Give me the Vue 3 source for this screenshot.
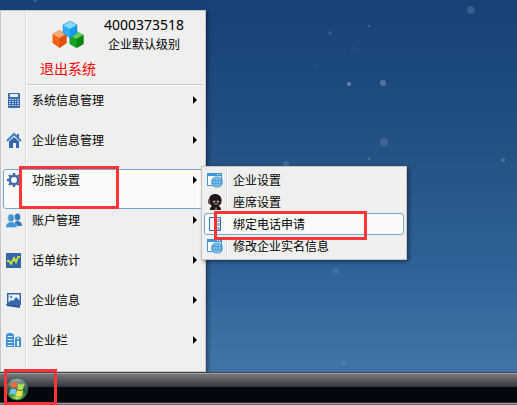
<template>
  <div class="desktop">
    <svg class="stars" aria-hidden="true">
      <circle v-for="(s, i) in stars" :key="i" :cx="s.x" :cy="s.y" :r="s.r" :fill-opacity="s.o" />
    </svg>

    <svg class="sprite" aria-hidden="true">
      <symbol id="ico-calc" viewBox="0 0 16 16">
        <rect x="2" y="1" width="12" height="15" rx="1" fill="#3b6db2" />
        <rect x="4" y="2" width="8" height="3" fill="#e8f0fa" />
        <g fill="#b4cae6">
          <rect x="3" y="7" width="2" height="1" /><rect x="6" y="7" width="2" height="1" /><rect x="9" y="7" width="1" height="1" /><rect x="11" y="7" width="2" height="1" />
          <rect x="3" y="9" width="2" height="1" /><rect x="6" y="9" width="2" height="1" /><rect x="9" y="9" width="1" height="1" /><rect x="11" y="9" width="2" height="1" />
          <rect x="3" y="11" width="2" height="1" /><rect x="6" y="11" width="2" height="1" /><rect x="9" y="11" width="1" height="1" /><rect x="11" y="11" width="2" height="1" />
          <rect x="3" y="13" width="2" height="1" /><rect x="6" y="13" width="2" height="1" /><rect x="9" y="13" width="1" height="1" /><rect x="11" y="13" width="2" height="1" />
        </g>
      </symbol>
      <symbol id="ico-home" viewBox="0 0 16 16">
        <path d="M11 2h2v5h-2z" fill="#3569ad" />
        <path d="M1 9 8 2l7 7" fill="none" stroke="#3e82c8" stroke-width="2" />
        <path d="M3 9.500 8 5l5 4.500V16h-3v-5H7v5H3z" fill="#3467ae" />
      </symbol>
      <symbol id="ico-gear" viewBox="0 0 16 16">
        <path
          d="M8 1v14M1 8h14M3 3l10 10M13 3 3 13"
          fill="none"
          stroke="#3c6aab"
          stroke-width="2.400"
        />
        <circle cx="8" cy="8" r="4.200" fill="#f5f8fb" stroke="#3c6aab" stroke-width="2.400" />
      </symbol>
      <symbol id="ico-users" viewBox="0 0 16 16">
        <g fill="#3579bd">
          <ellipse cx="11.500" cy="5" rx="2.800" ry="3.500" />
          <path d="M7 14c0-3 2-4 3.500-5h2c1.500 1 3.500 1 3.500 5z" />
        </g>
        <g fill="#3d96d6" stroke="#efefef" stroke-width=".5">
          <ellipse cx="5" cy="6" rx="3.300" ry="4" />
          <path d="M-.2 15.500c0-4 2-4.500 3.700-5.500h3c2 1 4.500 1.500 4.500 5.500z" />
        </g>
      </symbol>
      <symbol id="ico-chart" viewBox="0 0 16 16">
        <path d="M0 1h15v15H0z" fill="#3566a8" />
        <path d="M1 9h2l2 3 3-6 2 4 2-5h2" fill="none" stroke="#c4e03a" stroke-width="1.800" />
      </symbol>
      <symbol id="ico-picture" viewBox="0 0 16 16">
        <path d="m0 12 13 1 1-1v4l-13-2z" fill="#2b5797" />
        <path d="M1 1h14v12H1z" fill="#3467ae" />
        <path d="M2.500 2.500h11v8h-11z" fill="#f1f6fb" />
        <circle cx="5" cy="5" r="1.300" fill="#3d96d6" />
        <path d="m2 11 3-3 2 1 3-4 4 4v2z" fill="#3467ae" />
      </symbol>
      <symbol id="ico-building" viewBox="0 0 16 16">
        <path d="M0 3 2 1h4l2 2v12H0z" fill="#3d8fd0" />
        <path d="M1.500 4.500h5M1.500 7.500h5M1.500 10.500h5M1.500 13.500h5" stroke="#e4f0fa" />
        <path d="M9 6q3-3 6 0v9H9z" fill="#3d8fd0" />
        <circle cx="12" cy="6.500" r="1" fill="#fff" />
        <path d="M11 9h2v5h-2z" fill="#fff" />
      </symbol>
      <symbol id="ico-globe" viewBox="0 0 16 16">
        <path d="M.5 1.500h14v12H.5z" fill="#f7fbfe" stroke="#3d96d6" />
        <path d="M0 1h15v3H0z" fill="#3d96d6" />
        <path d="M10 2h1v1h-1zM12 2h1v1h-1z" fill="#fff" />
        <circle cx="10" cy="10" r="5.800" fill="#3792d2" />
        <path d="M4.500 10h11M5.500 7h9M5.500 13h9M10 4.500v11" fill="none" stroke="#c4e0f5" stroke-width=".6" />
        <ellipse cx="10" cy="10" rx="2.800" ry="5.500" fill="none" stroke="#c4e0f5" stroke-width=".6" />
      </symbol>
      <symbol id="ico-agent" viewBox="0 0 16 16">
        <path d="M2 6C2 2 5 0 8.500 0S15 3 14.500 7c0 3-1.500 4-3 5 1.500.5 2.500 1.500 2.500 4H3c0-2 .5-3 2-4-2-1-3-3-3-6z" fill="#211716" />
        <path d="M5 7.500Q9 4.500 13 7.500q-.5 3.500-4 3.500t-4-3.500z" fill="#43332f" />
        <circle cx="7" cy="7.500" r=".8" fill="#fff" /><circle cx="11" cy="7.500" r=".8" fill="#fff" />
        <path d="M7.500 10h3" stroke="#b5a49e" stroke-width=".8" />
        <rect x="1" y="5" width="2" height="5" rx="1" fill="#6d5b56" />
        <path d="m8 13 1 1 1-1v3H8z" fill="#7c6a66" />
      </symbol>
      <symbol id="ico-phonebook" viewBox="0 0 16 16">
        <path d="M2.500 1.500h11v13h-11z" fill="#fafcfe" stroke="#3f6eb0" />
        <path d="M7 1h2v14H7z" fill="#4272b4" />
        <path d="M10 3h3v3h-3zM10 7h3v3h-3zM10 11h3v3h-3z" fill="#9dbce0" />
      </symbol>
    </svg>

    <main class="workspace">
      <nav class="panel start-menu" aria-label="开始菜单">
        <header class="account">
          <svg class="logo" viewBox="0 0 32 28" aria-hidden="true">
            <path d="m7.500 9 7 4v9l-7 5-7-5v-9z" fill="#f4631c" />
            <path d="m7.500 9 7 4-7 4-7-4z" fill="#ffaa77" />
            <path d="m7.500 17 7-4v9l-7 5z" fill="#e34d0b" />
            <path d="m24.500 10 7 4v9l-7 4-7-4v-9z" fill="#19a326" />
            <path d="m24.500 10 7 4-7 4-7-4z" fill="#65cf59" />
            <path d="m24.500 18 7-4v9l-7 4z" fill="#08870f" />
            <path d="m18 0 7 4v8l-7 5-7-5V4z" fill="#2eaff3" />
            <path d="m18 0 7 4-7 4-7-4z" fill="#85dcff" />
            <path d="m18 8 7-4v8l-7 5z" fill="#139bea" />
            <path d="M11 4v8l7 5 7-5V4l-7-4z" fill="none" stroke="#2583bb" stroke-width=".5" />
          </svg>
          <div class="who">
            <span class="number">4000373518</span>
            <span class="level">企业默认级别</span>
          </div>
          <a class="logout" href="#">退出系统</a>
        </header>

        <ul class="list">
          <li v-for="item in menu" :key="item.label" class="entry">
            <button type="button" class="row tall" :class="{ active: item.children }">
              <svg class="icon"><use :href="'#ico-' + item.icon" /></svg>
              <span class="label">{{ item.label }}</span>
              <svg v-if="item.arrow" class="arrow" viewBox="0 0 4 8"><path d="M0 0l4 4-4 4z" /></svg>
            </button>
            <template v-if="item.children">
              <span class="mark mark-main"></span>
              <ul class="panel list submenu">
                <li v-for="child in item.children" :key="child.label" class="entry">
                  <button type="button" class="row" :class="{ active: child.active }">
                    <svg class="icon"><use :href="'#ico-' + child.icon" /></svg>
                    <span class="label">{{ child.label }}</span>
                  </button>
                  <span v-if="child.active" class="mark mark-sub"></span>
                </li>
              </ul>
            </template>
          </li>
        </ul>
      </nav>
    </main>

    <footer class="taskbar">
      <button type="button" class="orb" aria-label="开始">
        <svg viewBox="0 0 24 24">
          <defs>
            <radialGradient id="orb" cx=".5" cy="1" r="1">
              <stop offset="0" stop-color="#c4ff70" />
              <stop offset=".25" stop-color="#5cb040" />
              <stop offset=".55" stop-color="#28603c" />
              <stop offset=".85" stop-color="#5c7a72" />
              <stop offset="1" stop-color="#b4c4be" />
            </radialGradient>
          </defs>
          <circle cx="12" cy="12" r="11" fill="url(#orb)" stroke="#2f4f46" stroke-width=".8" />
          <path d="M3 8q9-10 18 0-9 5-18 0z" fill="#fff" fill-opacity=".2" />
          <path d="M6.500 6q3.500-2 6 0l-1 5.500q-3-2-6 0z" fill="#f26a35" />
          <path d="M13.200 6.500q3 2 6 0l-1 5.500q-3 2-6 0z" fill="#b2e25a" />
          <path d="M5.300 12.500q3-2 6 0l-1 5.500q-3-2-6 0z" fill="#6cc4f6" />
          <path d="M12 13q3 2 6 0l-1 5.500q-3 2-6 0z" fill="#ffdc55" />
        </svg>
      </button>
      <span class="mark mark-start"></span>
    </footer>
  </div>
</template>

<script setup>
const menu = [
  { label: '系统信息管理', icon: 'calc', arrow: true },
  { label: '企业信息管理', icon: 'home', arrow: true },
  {
    label: '功能设置',
    icon: 'gear',
    arrow: true,
    children: [
      { label: '企业设置', icon: 'globe' },
      { label: '座席设置', icon: 'agent' },
      { label: '绑定电话申请', icon: 'phonebook', active: true },
      { label: '修改企业实名信息', icon: 'globe' }
    ]
  },
  { label: '账户管理', icon: 'users', arrow: true },
  { label: '话单统计', icon: 'chart', arrow: true },
  { label: '企业信息', icon: 'picture', arrow: true },
  { label: '企业栏', icon: 'building', arrow: true }
]

const stars = [
  { x: 471, y: 10, r: 4, o: 0.16 },
  { x: 369, y: 26, r: 1, o: 0.3 },
  { x: 330, y: 33, r: 2, o: 0.14 },
  { x: 354, y: 49, r: 3, o: 0.03 },
  { x: 317, y: 65, r: 1, o: 0.12 },
  { x: 349, y: 84, r: 2, o: 0.38 },
  { x: 383, y: 83, r: 3, o: 0.27 },
  { x: 384, y: 142, r: 4, o: 0.14 },
  { x: 369, y: 159, r: 1, o: 0.3 },
  { x: 503, y: 160, r: 2, o: 0.2 },
  { x: 286, y: 164, r: 3, o: 0.15 },
  { x: 35, y: 0, r: 2, o: 0.2 },
  { x: 336, y: 271, r: 3, o: 0.1 },
  { x: 344, y: 363, r: 2, o: 0.15 }
]
</script>

<style>
body {
  margin: 0;
}
</style>

<style scoped>
.desktop {
  position: relative;
  display: flex;
  flex-direction: column;
  min-height: 100vh;
  overflow: hidden;
  background: linear-gradient(180deg, #164277 0%, #245284 38%, #30639a 68%, #4275a8 93%);
  font-family: "Noto Sans", "Noto Sans CJK SC", sans-serif;
  font-size: 12px;
  color: #000;
}

.stars {
  position: absolute;
  top: 0;
  left: 0;
  width: 100%;
  height: 100%;
  fill: #d5ecff;
}

.sprite {
  position: absolute;
  width: 0;
  height: 0;
}

.workspace {
  flex: 1;
  display: flex;
  align-items: flex-end;
}

.panel {
  box-sizing: border-box;
  padding: 2px;
  border: 1px solid #c6c6c6;
  background: linear-gradient(90deg, #efefef 24px, #dcdcdc 24px, #dcdcdc 25px, #fff 25px, #fff 26px, #efefef 26px);
  box-shadow: 2px 2px 4px rgba(0, 0, 0, 0.4);
}

.start-menu {
  position: relative;
  width: clamp(206px, 39vw, 260px);
  padding-top: 0;
}

.account {
  display: grid;
  grid-template-columns: 56px auto;
  justify-content: start;
  justify-items: center;
  column-gap: 8px;
  margin: 0 0 3px 24px;
  padding: 4px 0 5px 13px;
  border-bottom: 1px solid #c6c6c6;
  box-shadow: 0 1px 0 #fff;
}

.logo {
  width: 32px;
  height: 28px;
  margin-top: 6px;
}

.who {
  display: flex;
  flex-direction: column;
  align-items: center;
  line-height: 20px;
}

.number {
  font-size: 14px;
}

.logout {
  margin-top: 4px;
  font-size: 14px;
  line-height: 20px;
  color: #f00;
  text-decoration: none;
}

.list {
  margin: 0;
  list-style: none;
}

.start-menu > .list {
  padding: 1px 0 0;
}

.entry {
  position: relative;
}

.row {
  box-sizing: border-box;
  display: flex;
  align-items: flex-start;
  width: 100%;
  height: 22px;
  padding: 2px 5px 0 2px;
  border: 1px solid transparent;
  border-radius: 3px;
  background: none;
  font: inherit;
  line-height: 18px;
  color: inherit;
  text-align: left;
}

.row.tall {
  height: 40px;
}

.row.active {
  border-color: #74a8d2;
  background: #fafafa;
}

.icon {
  flex: none;
  width: 16px;
  height: 16px;
}

.label {
  flex: 1;
  margin-left: 10px;
  white-space: nowrap;
}

.arrow {
  width: 4px;
  height: 8px;
  margin-top: 4px;
}

.submenu {
  position: absolute;
  z-index: 2;
  top: -3px;
  left: calc(100% - 2px);
  width: max-content;
  min-width: 206px;
}

/* red callout frames */
.mark {
  position: absolute;
  z-index: 3;
  box-sizing: border-box;
  border: 3px solid #fd3438;
  pointer-events: none;
}

.mark-main {
  top: -3px;
  left: 16px;
  width: 100px;
  height: 43px;
}

.mark-sub {
  top: -2px;
  left: 10px;
  width: 153px;
  height: 29px;
}

.mark-start {
  top: -3px;
  left: 4px;
  width: 53px;
  height: 36px;
}

.taskbar {
  position: relative;
  box-sizing: border-box;
  display: flex;
  align-items: center;
  height: 33px;
  padding: 0 5px;
  background: linear-gradient(180deg,
    #454549 1px, #a0a0a5 1px, #a0a0a5 2px, #78787c 2px, #333639 15px,
    #03080e 15px, #03080e 30px, #303236 30px, #303236 31px,
    #a0a0a5 31px, #a0a0a5 32px, #66666a 32px);
}

.orb {
  width: 24px;
  height: 24px;
  padding: 0;
  border: 0;
  background: none;
}

.orb svg {
  display: block;
  width: 24px;
  height: 24px;
}
</style>
